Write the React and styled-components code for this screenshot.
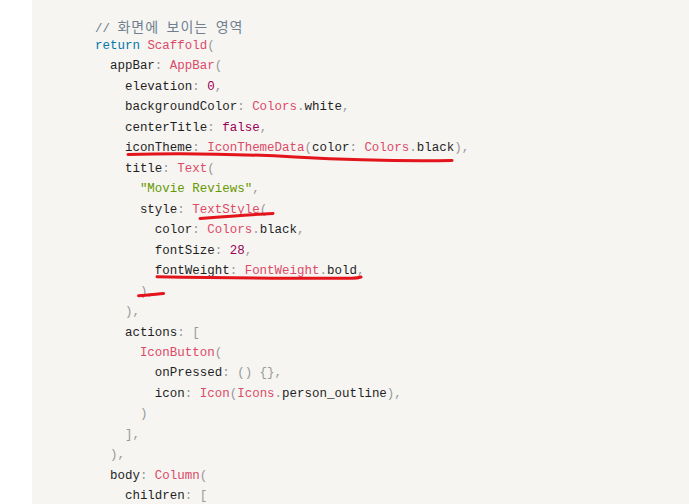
import React from "react";
import styled, { createGlobalStyle } from "styled-components";

const GlobalStyle = createGlobalStyle`
  html, body { margin: 0; padding: 0; background: #ffffff; }
  body { overflow: hidden; }
`;

const Page = styled.div`
  position: relative;
  width: 689px;
  height: 504px;
  padding-left: 32px;
  box-sizing: border-box;
  overflow: hidden;
`;

const CodeBlock = styled.pre`
  margin: 0;
  height: 100%;
  box-sizing: border-box;
  padding: 15.5px 0 0 63px;
  background: #f6f5f2;
  font-family: "Liberation Mono", "DejaVu Sans Mono", monospace;
  font-size: 12.47px;
  line-height: 20.48px;
  color: #1f1f1f;
  white-space: pre;
`;

const Line = styled.div`
  padding-left: ${(p) => p.$indent * 2}ch;
  height: 20.48px;
`;

const colors = {
  cm: "#708090",
  kw: "#0077aa",
  cls: "#dd4a68",
  pn: "#999999",
  num: "#990055",
  str: "#669900",
  id: "#1f1f1f",
};

const Tok = styled.span`
  color: ${(p) => colors[p.$t]};
`;

const Hangul = styled.span`
  font-family: "Noto Sans CJK KR", sans-serif;
  font-size: 14px;
  letter-spacing: 1px;
  color: #708090;
`;

const Marks = styled.svg`
  position: absolute;
  left: 0;
  top: 0;
  pointer-events: none;
`;

const lines = [
  [0, [["cm", "// "], ["ko", "화면에"], ["cm", " "], ["ko", "보이는"], ["cm", " "], ["ko", "영역"]]],
  [0, [["kw", "return"], ["id", " "], ["cls", "Scaffold"], ["pn", "("]]],
  [1, [["id", "appBar"], ["pn", ": "], ["cls", "AppBar"], ["pn", "("]]],
  [2, [["id", "elevation"], ["pn", ": "], ["num", "0"], ["pn", ","]]],
  [2, [["id", "backgroundColor"], ["pn", ": "], ["cls", "Colors"], ["pn", "."], ["id", "white"], ["pn", ","]]],
  [2, [["id", "centerTitle"], ["pn", ": "], ["num", "false"], ["pn", ","]]],
  [2, [["id", "iconTheme"], ["pn", ": "], ["cls", "IconThemeData"], ["pn", "("], ["id", "color"], ["pn", ": "], ["cls", "Colors"], ["pn", "."], ["id", "black"], ["pn", "),"]]],
  [2, [["id", "title"], ["pn", ": "], ["cls", "Text"], ["pn", "("]]],
  [3, [["str", "\"Movie Reviews\""], ["pn", ","]]],
  [3, [["id", "style"], ["pn", ": "], ["cls", "TextStyle"], ["pn", "("]]],
  [4, [["id", "color"], ["pn", ": "], ["cls", "Colors"], ["pn", "."], ["id", "black"], ["pn", ","]]],
  [4, [["id", "fontSize"], ["pn", ": "], ["num", "28"], ["pn", ","]]],
  [4, [["id", "fontWeight"], ["pn", ": "], ["cls", "FontWeight"], ["pn", "."], ["id", "bold"], ["pn", ","]]],
  [3, [["pn", "),"]]],
  [2, [["pn", "),"]]],
  [2, [["id", "actions"], ["pn", ": ["]]],
  [3, [["cls", "IconButton"], ["pn", "("]]],
  [4, [["id", "onPressed"], ["pn", ": () {},"]]],
  [4, [["id", "icon"], ["pn", ": "], ["cls", "Icon"], ["pn", "("], ["cls", "Icons"], ["pn", "."], ["id", "person_outline"], ["pn", "),"]]],
  [3, [["pn", ")"]]],
  [2, [["pn", "],"]]],
  [1, [["pn", "),"]]],
  [1, [["id", "body"], ["pn", ": "], ["cls", "Column"], ["pn", "("]]],
  [2, [["id", "children"], ["pn", ": ["]]],
];

export default function App() {
  return (
    <>
      <GlobalStyle />
      <Page>
        <CodeBlock>
          {lines.map(([indent, toks], i) => (
            <Line key={i} $indent={indent}>
              {toks.map(([t, s], j) =>
                t === "ko" ? (
                  <Hangul key={j}>{s}</Hangul>
                ) : (
                  <Tok key={j} $t={t}>{s}</Tok>
                )
              )}
            </Line>
          ))}
        </CodeBlock>
        <Marks width="689" height="504" viewBox="0 0 689 504">
          <g fill="none" stroke="#e3141b" strokeWidth="3" strokeLinecap="round">
            <path d="M128 154.5 C 170 153, 230 153.5, 295 157 S 400 161.5, 452 160.5" />
            <path d="M200 218.5 C 225 216.5, 250 214.5, 273 213.5" />
            <path d="M157 276.8 C 200 277.5, 290 278.5, 352 278.3 Q 358 278, 361 277" />
            <path d="M138.5 295.8 C 146 295.5, 156 294.2, 163.5 293.5" />
          </g>
        </Marks>
      </Page>
    </>
  );
}
